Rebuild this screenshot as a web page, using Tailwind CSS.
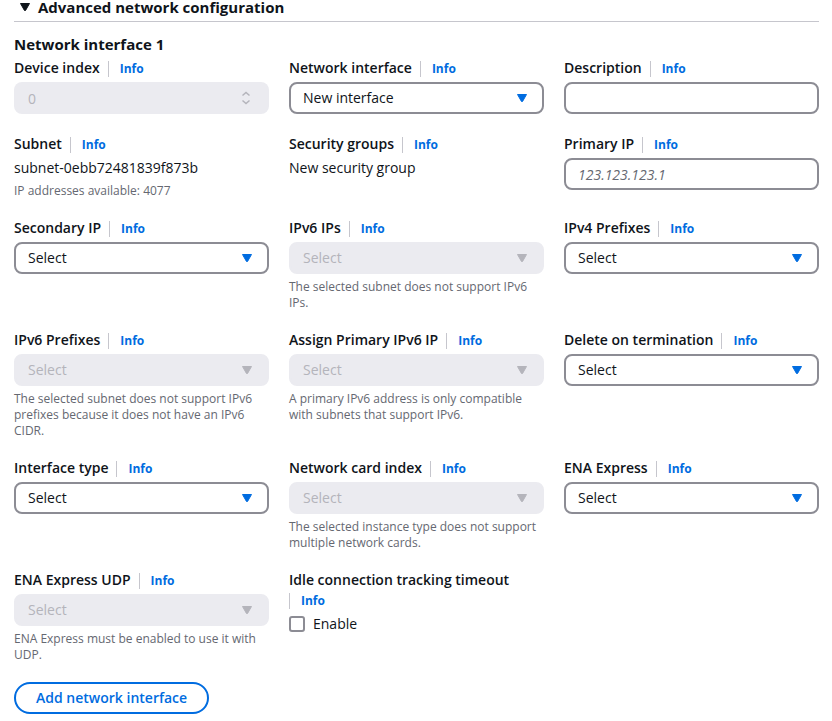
<!DOCTYPE html>
<html lang="en">
<head>
  <meta charset="UTF-8" />
  <meta name="viewport" content="width=device-width, initial-scale=1.0" />
  <title>Advanced network configuration</title>
  <script src="https://cdn.jsdelivr.net/npm/@tailwindcss/browser@4"></script>
</head>
<body class="bg-white text-[#0f141a] font-['Open_Sans','Noto_Sans',sans-serif] text-sm leading-5">
  <details open class="pl-[14px] pr-[13px] pb-2">
    <summary class="flex items-center gap-2 border-b border-[#c6c6cd] pb-[7px] pl-[6px] text-[15px] leading-[14px] font-bold cursor-pointer list-none">
      <svg class="w-[10px] h-2" viewBox="0 0 10 8" fill="currentColor" stroke="currentColor" stroke-linejoin="round"><path d="M.5.5h9L5.500 7.500h-1z" /></svg>
      <h2>Advanced network configuration</h2>
    </summary>

    <h3 class="mt-3 mb-1 text-[15px] leading-5 font-bold">Network interface 1</h3>
    <form id="fields" class="grid grid-cols-3 gap-5"></form>

    <button type="button" class="mt-5 h-8 px-5 rounded-full border-2 border-[#006ce0] text-[#006ce0] font-semibold hover:bg-blue-50">Add network interface</button>
  </details>

  <script>
    const fields = [
      { id: "device-index", label: "Device index", type: "number", value: "0" },
      { id: "network-interface", label: "Network interface", type: "select", value: "New interface" },
      { id: "description", label: "Description", type: "text" },
      { id: "subnet", label: "Subnet", type: "value", value: "subnet-0ebb72481839f873b", help: "IP addresses available: 4077" },
      { id: "security-groups", label: "Security groups", type: "value", value: "New security group" },
      { id: "primary-ip", label: "Primary IP", type: "text", placeholder: "123.123.123.1" },
      { id: "secondary-ip", label: "Secondary IP", type: "select" },
      { id: "ipv6-ips", label: "IPv6 IPs", type: "select", disabled: true, help: "The selected subnet does not support IPv6 IPs." },
      { id: "ipv4-prefixes", label: "IPv4 Prefixes", type: "select" },
      { id: "ipv6-prefixes", label: "IPv6 Prefixes", type: "select", disabled: true, help: "The selected subnet does not support IPv6 prefixes because it does not have an IPv6 CIDR." },
      { id: "primary-ipv6", label: "Assign Primary IPv6 IP", type: "select", disabled: true, help: "A primary IPv6 address is only compatible with subnets that support IPv6." },
      { id: "delete-on-termination", label: "Delete on termination", type: "select" },
      { id: "interface-type", label: "Interface type", type: "select" },
      { id: "card-index", label: "Network card index", type: "select", disabled: true, help: "The selected instance type does not support multiple network cards." },
      { id: "ena-express", label: "ENA Express", type: "select" },
      { id: "ena-express-udp", label: "ENA Express UDP", type: "select", disabled: true, help: "ENA Express must be enabled to use it with UDP." },
      { id: "idle-timeout", label: "Idle connection tracking timeout", type: "checkbox", value: "Enable" }
    ];

    const controls = {
      number: (f) => `
        <div class="relative">
          <input id="${f.id}" type="number" value="${f.value}" disabled class="block w-full h-8 px-[14px] rounded-lg bg-[#ebebf0] text-[#b4b4bb] [&::-webkit-inner-spin-button]:appearance-none" />
          <svg class="absolute right-[18px] top-[9px] w-[10px] h-[14px] text-[#b4b4bb] pointer-events-none" viewBox="0 0 10 14" fill="none" stroke="currentColor" stroke-width="1.5"><path d="M1.500 4.500 5 1.500 8.500 4.500M1.500 9.500 5 12.500 8.500 9.500" /></svg>
        </div>`,
      select: (f) => `
        <div class="relative">
          <select id="${f.id}" ${f.disabled ? "disabled" : ""} class="peer block appearance-none w-full h-8 px-3 rounded-lg border-2 border-[#8c8c94] bg-white disabled:opacity-100 disabled:border-[#ebebf0] disabled:bg-[#ebebf0] disabled:text-[#b4b4bb]">
            <option>${f.value || "Select"}</option>
          </select>
          <svg class="absolute right-[17px] top-3 w-[10px] h-2 text-[#006ce0] peer-disabled:text-[#b4b4bb] pointer-events-none" viewBox="0 0 10 8" fill="currentColor" stroke="currentColor" stroke-linejoin="round"><path d="M.5.5h9L5.500 7.500h-1z" /></svg>
        </div>`,
      text: (f) => `
        <input id="${f.id}" type="text" placeholder="${f.placeholder || ""}" class="block w-full h-8 px-3 rounded-lg border-2 border-[#8c8c94] placeholder:italic placeholder:text-[#656871]" />`,
      value: (f) => `<div>${f.value}</div>`,
      checkbox: (f) => `
        <label class="flex items-center gap-2">
          <input id="${f.id}" type="checkbox" class="appearance-none w-4 h-4 rounded-[3px] border-2 border-[#8c8c94] checked:bg-[#006ce0] checked:border-[#006ce0]" />
          ${f.value}
        </label>`
    };

    document.getElementById("fields").innerHTML = fields.map((f) => {
      const tag = f.type === "value" ? "span" : "label";
      const target = f.type === "value" ? "" : `for="${f.id}"`;
      return `
        <div class="flex flex-col gap-1">
          <div class="flex flex-wrap gap-x-2">
            <${tag} ${target} class="font-semibold">${f.label}</${tag}>
            <span class="h-5"><a href="#" class="inline-block border-l border-[#c6c6cd] pl-[11px] text-xs leading-4 font-bold text-[#006ce0] hover:underline">Info</a></span>
          </div>
          ${controls[f.type](f)}
          ${f.help ? `<p class="pt-px -mb-px text-xs leading-4 text-[#656871]">${f.help}</p>` : ""}
        </div>`;
    }).join("");
  </script>
</body>
</html>
